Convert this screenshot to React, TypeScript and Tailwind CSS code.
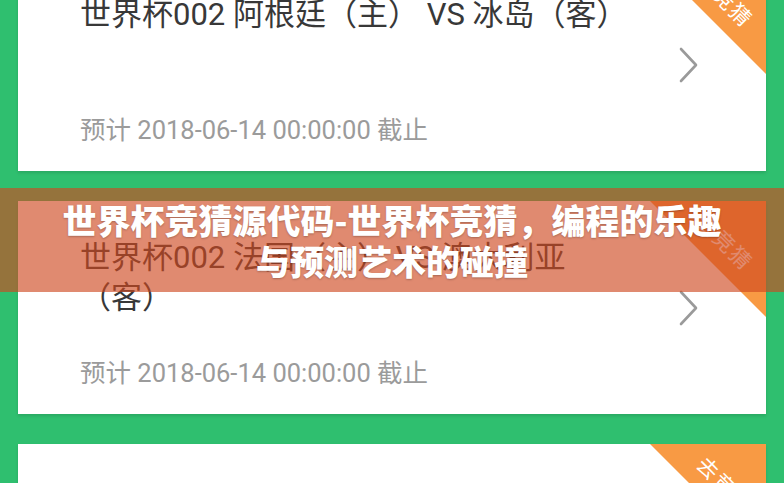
import React from "react";

type Match = {
  id: number;
  title: string;
  deadline: string;
};

const matches: Match[] = [
  { id: 1, title: "世界杯002 阿根廷（主） VS 冰岛（客）", deadline: "预计 2018-06-14 00:00:00 截止" },
  { id: 2, title: "世界杯002 法国（主） VS 澳大利亚（客）", deadline: "预计 2018-06-14 00:00:00 截止" },
  { id: 3, title: "世界杯003 秘鲁（主） VS 丹麦（客）", deadline: "预计 2018-06-14 00:00:00 截止" },
];

const font = { fontFamily: 'Roboto, "Noto Sans CJK SC", sans-serif' };

function Chevron() {
  return (
    <svg width="22" height="36" viewBox="0 0 22 36" fill="none" className="shrink-0 mt-[52px]">
      <path d="M3 2 L18 18 L3 34" stroke="#9a9a9a" strokeWidth="2.6" strokeLinecap="round" strokeLinejoin="round" />
    </svg>
  );
}

function MatchCard({ match }: { match: Match }) {
  return (
    <div className="relative h-[213px] bg-white shadow-[0_2px_3px_rgba(0,0,0,0.12)] overflow-hidden flex pl-[62px] pr-[66px] pt-[37px] pb-[25px]">
      <div className="flex-1 flex flex-col justify-between">
        <div className="max-w-[546px] text-[31px] leading-[40px] text-[#383838]">{match.title}</div>
        <div className="text-[25.5px] leading-[32px] text-[#9b9b9b]">{match.deadline}</div>
      </div>
      <Chevron />
      {/* corner ribbon */}
      <div className="absolute top-0 right-0 w-[116px] h-[116px] bg-[#f89a44] [clip-path:polygon(0_0,100%_0,100%_100%)]" />
      <div className="absolute top-[42px] right-[42px] translate-x-1/2 -translate-y-1/2 rotate-45 text-white text-[21px] leading-none tracking-[2px] whitespace-nowrap">
        去竞猜
      </div>
    </div>
  );
}

export default function App() {
  return (
    <div className="relative w-full h-[483px] overflow-hidden bg-[#2fbf6f]" style={font}>
      <div className="-mt-[42px] px-[18px] flex flex-col gap-[30px]">
        {matches.map((m) => (
          <MatchCard key={m.id} match={m} />
        ))}
      </div>

      {/* headline banner over the list */}
      <div className="absolute left-0 right-0 top-[188px] h-[104px] bg-[rgba(206,72,32,0.64)] flex items-center justify-center">
        <div
          className="w-[690px] text-center text-white font-black text-[34px] leading-[41px] [text-shadow:0_1px_2px_rgba(0,0,0,0.25)]"
          style={{ fontFamily: '"Noto Sans CJK SC", sans-serif' }}
        >
          世界杯竞猜源代码-世界杯竞猜，编程的乐趣与预测艺术的碰撞
        </div>
      </div>
    </div>
  );
}
